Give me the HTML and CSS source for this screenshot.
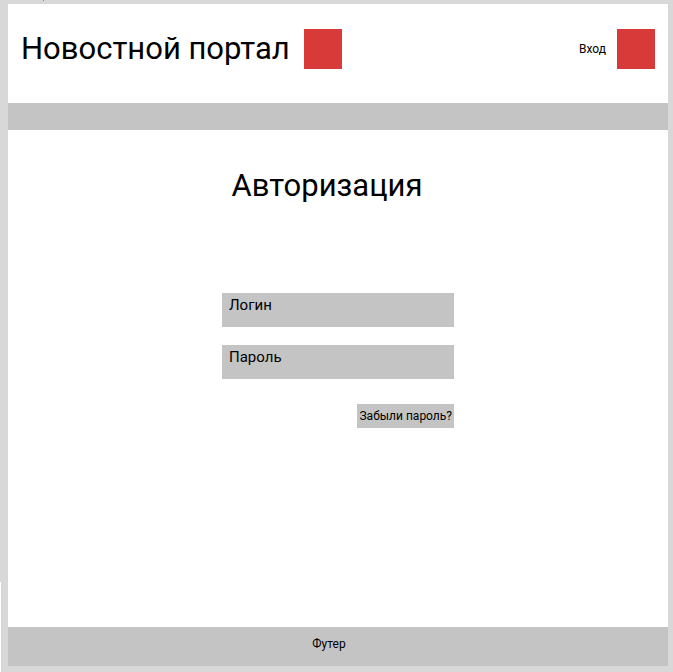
FILE: index.html
```html
<!DOCTYPE html>
<html lang="ru">
<head>
<meta charset="utf-8">
<meta name="viewport" content="width=device-width, initial-scale=1">
<title>Новостной портал</title>
<link rel="stylesheet" href="styles.css">
</head>
<body>
<div class="page">
  <header class="header">
    <div class="brand">
      <span class="brand-name">Новостной портал</span>
      <span class="square"></span>
    </div>
    <div class="account">
      <a class="login-link" href="#login-form">Вход</a>
      <span class="square"></span>
    </div>
  </header>
  <nav class="nav" aria-label="Разделы"></nav>
  <main class="main">
    <h1 class="title">Авторизация</h1>
    <form class="form" id="login-form">
      <input class="field" id="login" type="text" placeholder="Логин" aria-label="Логин">
      <input class="field" id="password" type="password" placeholder="Пароль" aria-label="Пароль">
      <button class="forgot" type="button">Забыли пароль?</button>
    </form>
  </main>
  <footer class="footer">Футер</footer>
</div>
<span class="canvas-mark"></span>
<span class="canvas-edge"></span>
</body>
</html>
```
FILE: styles.css
```css
* {
  box-sizing: border-box;
}

body {
  position: relative;
  display: flex;
  min-height: 100vh;
  margin: 0;
  padding: 4px 5px 6px 8px;
  background: #d8d8d8;
  color: #000;
  font-family: Roboto, sans-serif;
  font-size: 12px;
}

.page {
  display: flex;
  flex: 1;
  flex-direction: column;
  background: #fff;
}

.header {
  display: flex;
  justify-content: space-between;
  padding: 25px 13px 34px;
}

.brand,
.account {
  display: flex;
  align-items: center;
}

.brand {
  gap: 14px;
}

.account {
  gap: 11px;
}

.brand-name,
.title {
  font-size: 31px;
  font-weight: 400;
  line-height: 36px;
}

.square {
  width: 38px;
  height: 40px;
  background: #d83939;
}

.login-link {
  color: inherit;
  text-decoration: none;
}

.nav {
  height: 27px;
  background: #c4c4c4;
}

.main {
  display: flex;
  flex: 1;
  flex-direction: column;
  align-items: center;
  padding: 38px 22px 24px 0;
}

.title {
  margin: 0;
}

.form {
  display: flex;
  flex-direction: column;
  width: 35%;
  min-width: 232px;
  margin: 89px 0 0 22px;
}

.field {
  height: 34px;
  margin: 0 0 18px;
  padding: 0 7px 10px;
  border: 0;
  border-radius: 0;
  background: #c4c4c4;
  color: #000;
  font: 15px Roboto, sans-serif;
}

.field::placeholder {
  color: #000;
  opacity: 1;
}

.forgot {
  align-self: flex-end;
  height: 24px;
  margin-top: 7px;
  padding: 0 2px;
  border: 0;
  background: #c4c4c4;
  color: #000;
  font: 12px Roboto, sans-serif;
}

.footer {
  padding: 10px 18px 15px 0;
  background: #c4c4c4;
  line-height: 14px;
  text-align: center;
}

.canvas-mark {
  position: absolute;
  top: 0;
  left: 43px;
  width: 1px;
  height: 1px;
  background: #888;
}

.canvas-edge {
  position: absolute;
  bottom: 0;
  left: 0;
  width: 1px;
  height: 90px;
  background: #fff;
}
```
